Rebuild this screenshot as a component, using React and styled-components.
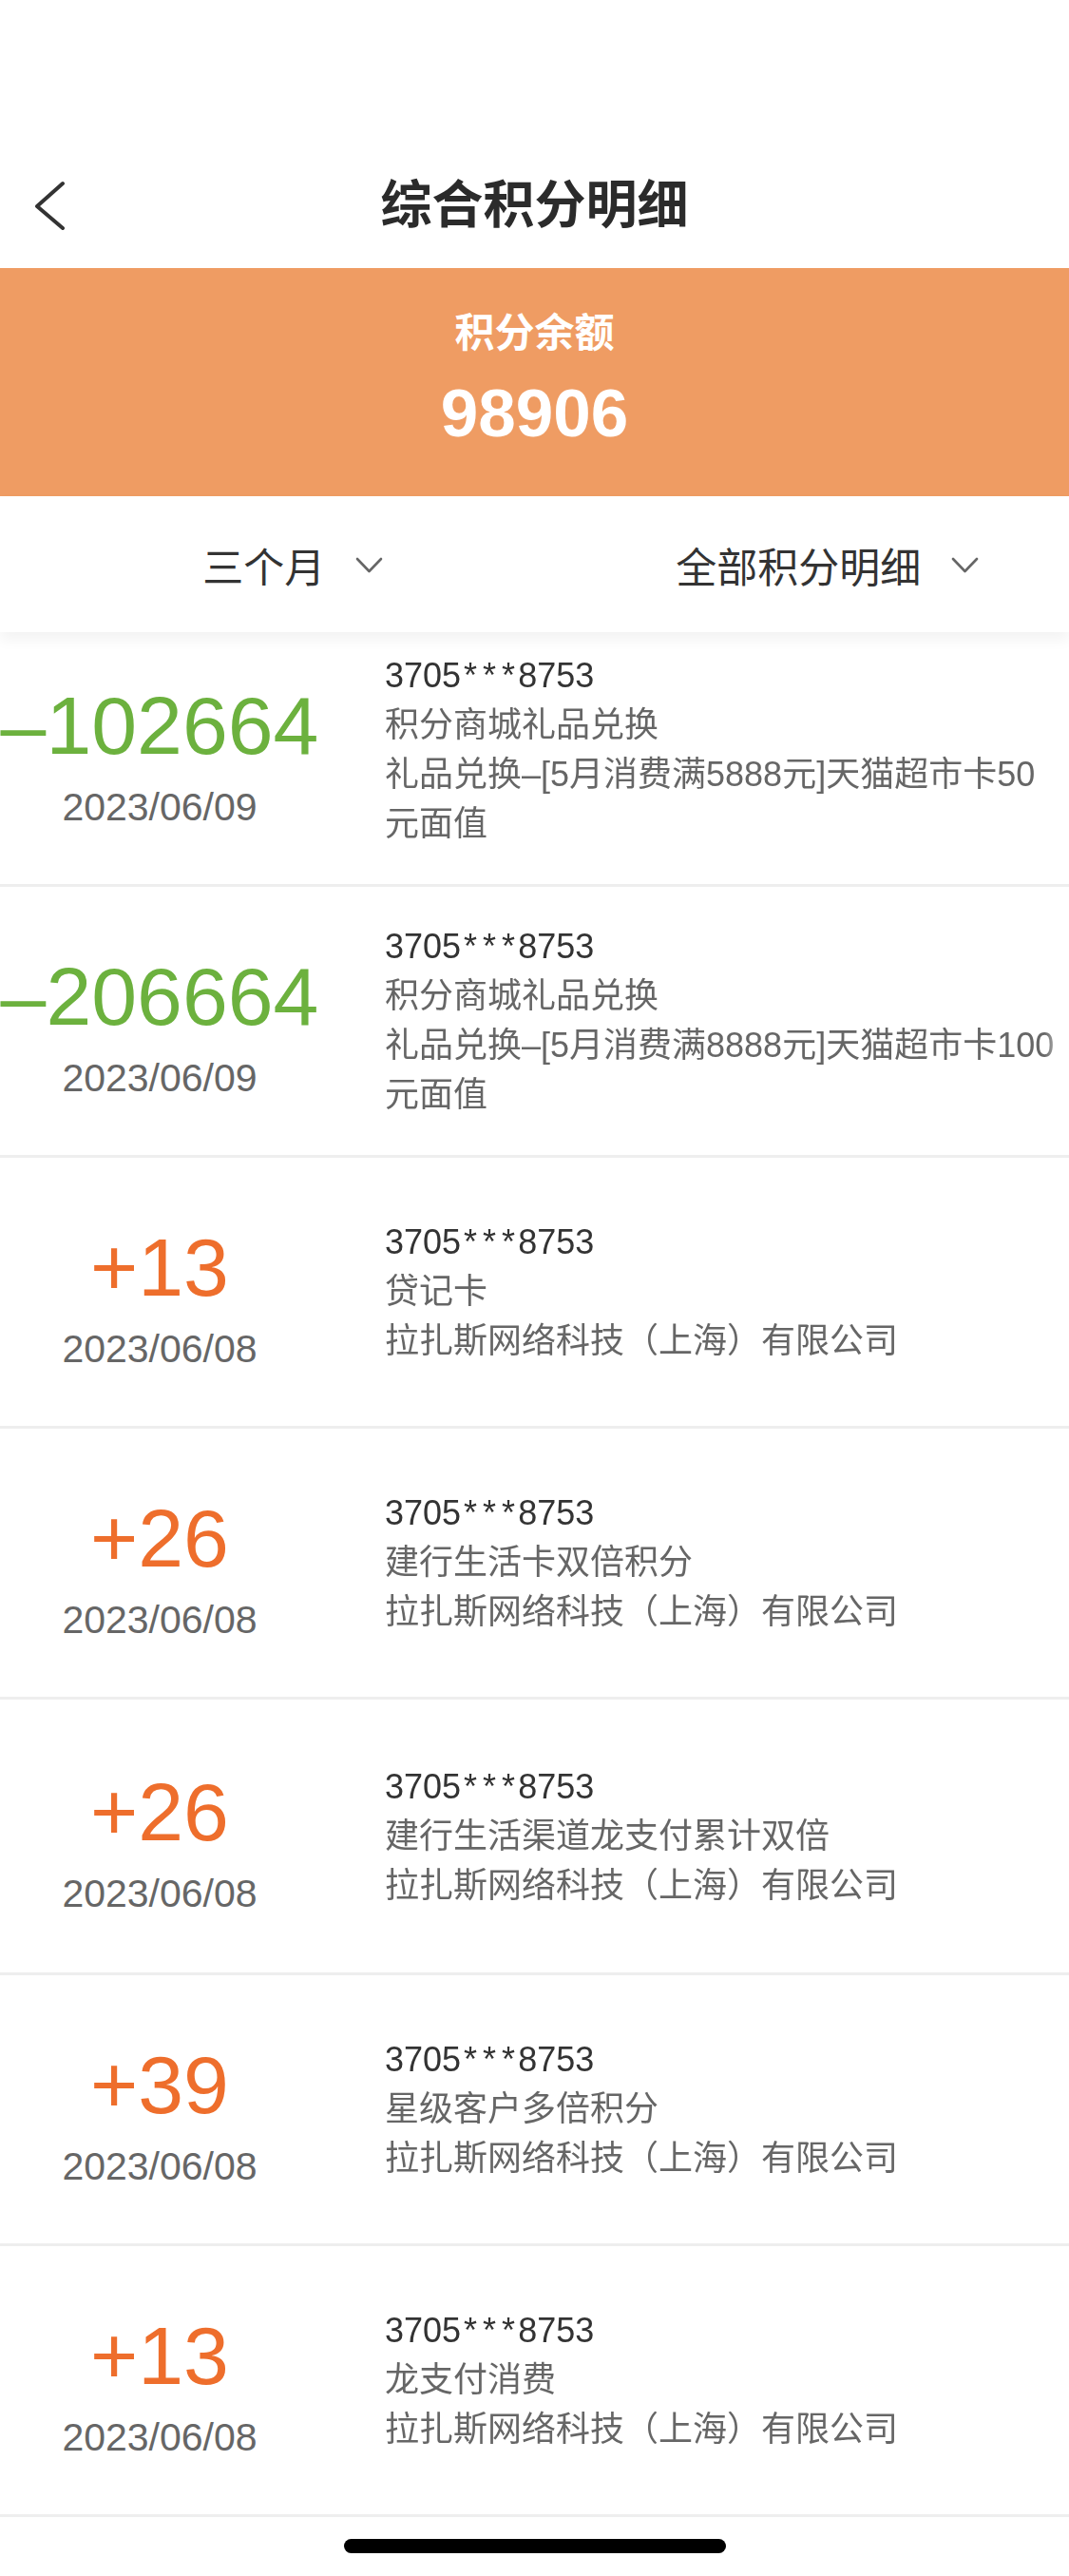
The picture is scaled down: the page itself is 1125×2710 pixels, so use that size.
import React from "react";
import styled, { createGlobalStyle } from "styled-components";

const GlobalStyle = createGlobalStyle`
  html, body {
    margin: 0;
    padding: 0;
    background: #fff;
  }
  body {
    font-family: "Liberation Sans", "Noto Sans CJK SC", sans-serif;
    overflow: hidden;
  }
`;

const Page = styled.div`
  position: relative;
  width: 1125px;
  height: 2710px;
  overflow: hidden;
  background: #fff;
`;

const StatusBar = styled.div`
  height: 150px;
`;

const NavBar = styled.div`
  display: grid;
  grid-template-columns: 140px 1fr 140px;
  align-items: center;
  height: 132px;
`;

const BackBtn = styled.div`
  display: flex;
  align-items: center;
  padding-left: 37px;
`;

const Title = styled.h1`
  margin: 0;
  text-align: center;
  font-size: 54px;
  font-weight: 700;
  line-height: 1;
  color: #2b2b2b;
`;

const Balance = styled.section`
  box-sizing: border-box;
  height: 240px;
  padding-top: 44px;
  display: flex;
  flex-direction: column;
  align-items: center;
  background: #ef9c63;
  color: #fff;
`;

const BalanceLabel = styled.div`
  font-size: 42px;
  line-height: 50px;
  font-weight: 600;
`;

const BalanceValue = styled.div`
  margin-top: 19px;
  font-size: 71px;
  line-height: 80px;
  font-weight: 700;
`;

const FilterBar = styled.div`
  position: relative;
  z-index: 1;
  display: flex;
  height: 143px;
  background: #fff;
  box-shadow: 0 8px 14px rgba(0, 0, 0, 0.05);
`;

const FilterItem = styled.div`
  flex: 1;
  display: flex;
  align-items: center;
  justify-content: center;
  gap: 32px;
  padding-left: 54px;
  font-size: 43px;
  color: #333;
`;

const List = styled.div`
  margin-top: -17px;
`;

const Row = styled.div`
  box-sizing: border-box;
  display: flex;
  height: ${(p) => p.$h}px;
  border-bottom: 3px solid #eeeeee;
  overflow: hidden;
`;

const AmountCol = styled.div`
  box-sizing: border-box;
  width: 336px;
  flex-shrink: 0;
  padding-top: 13px;
  display: flex;
  flex-direction: column;
  align-items: center;
  justify-content: center;
`;

const Amount = styled.div`
  font-size: 86px;
  line-height: 90px;
  white-space: nowrap;
  color: ${(p) => (p.$minus ? "#6cb13e" : "#ee6e2c")};
`;

const DateText = styled.div`
  margin-top: 17px;
  font-size: 41px;
  line-height: 48px;
  color: #666;
`;

const InfoCol = styled.div`
  flex: 1;
  margin-left: 69px;
  display: flex;
  flex-direction: column;
  justify-content: center;
  white-space: nowrap;
  -webkit-mask-image: linear-gradient(to right, #000 calc(100% - 26px), transparent);
  mask-image: linear-gradient(to right, #000 calc(100% - 26px), transparent);
`;

const Account = styled.div`
  font-size: 36px;
  line-height: 52px;
  color: #333;
`;

const Stars = styled.span`
  padding-left: 3px;
  margin-right: -3px;
  letter-spacing: 6px;
`;

const InfoLine = styled.div`
  font-size: 36px;
  line-height: 52px;
  color: #666;
`;

const HomeIndicator = styled.div`
  position: absolute;
  left: 50%;
  bottom: 24px;
  width: 402px;
  height: 15px;
  margin-left: -201px;
  border-radius: 8px;
  background: #000;
`;

const BackIcon = () => (
  <svg width="32" height="52" viewBox="0 0 32 52">
    <polyline
      points="29,3 2,27 29,50"
      fill="none"
      stroke="#333"
      strokeWidth="4"
      strokeLinecap="round"
      strokeLinejoin="round"
    />
  </svg>
);

const DownIcon = () => (
  <svg width="29" height="18" viewBox="0 0 29 18">
    <polyline
      points="2,3 14.5,16 27,3"
      fill="none"
      stroke="#666"
      strokeWidth="2.6"
      strokeLinecap="round"
      strokeLinejoin="round"
    />
  </svg>
);

const SHOP = "拉扎斯网络科技（上海）有限公司";

const records = [
  {
    amount: "–102664",
    minus: true,
    date: "2023/06/09",
    lines: ["积分商城礼品兑换", "礼品兑换–[5月消费满5888元]天猫超市卡50", "元面值"],
    h: 285,
  },
  {
    amount: "–206664",
    minus: true,
    date: "2023/06/09",
    lines: ["积分商城礼品兑换", "礼品兑换–[5月消费满8888元]天猫超市卡100", "元面值"],
    h: 285,
  },
  { amount: "+13", date: "2023/06/08", lines: ["贷记卡", SHOP], h: 285 },
  { amount: "+26", date: "2023/06/08", lines: ["建行生活卡双倍积分", SHOP], h: 285 },
  { amount: "+26", date: "2023/06/08", lines: ["建行生活渠道龙支付累计双倍", SHOP], h: 290 },
  { amount: "+39", date: "2023/06/08", lines: ["星级客户多倍积分", SHOP], h: 285 },
  { amount: "+13", date: "2023/06/08", lines: ["龙支付消费", SHOP], h: 285 },
];

function App() {
  return (
    <Page>
      <GlobalStyle />
      <StatusBar />
      <NavBar>
        <BackBtn>
          <BackIcon />
        </BackBtn>
        <Title>综合积分明细</Title>
        <div />
      </NavBar>
      <Balance>
        <BalanceLabel>积分余额</BalanceLabel>
        <BalanceValue>98906</BalanceValue>
      </Balance>
      <FilterBar>
        <FilterItem>
          三个月
          <DownIcon />
        </FilterItem>
        <FilterItem>
          全部积分明细
          <DownIcon />
        </FilterItem>
      </FilterBar>
      <List>
        {records.map((r, i) => (
          <Row key={i} $h={r.h}>
            <AmountCol>
              <Amount $minus={r.minus}>{r.amount}</Amount>
              <DateText>{r.date}</DateText>
            </AmountCol>
            <InfoCol>
              <Account>
                3705<Stars>***</Stars>8753
              </Account>
              {r.lines.map((line, j) => (
                <InfoLine key={j}>{line}</InfoLine>
              ))}
            </InfoCol>
          </Row>
        ))}
      </List>
      <HomeIndicator />
    </Page>
  );
}

export default App;
